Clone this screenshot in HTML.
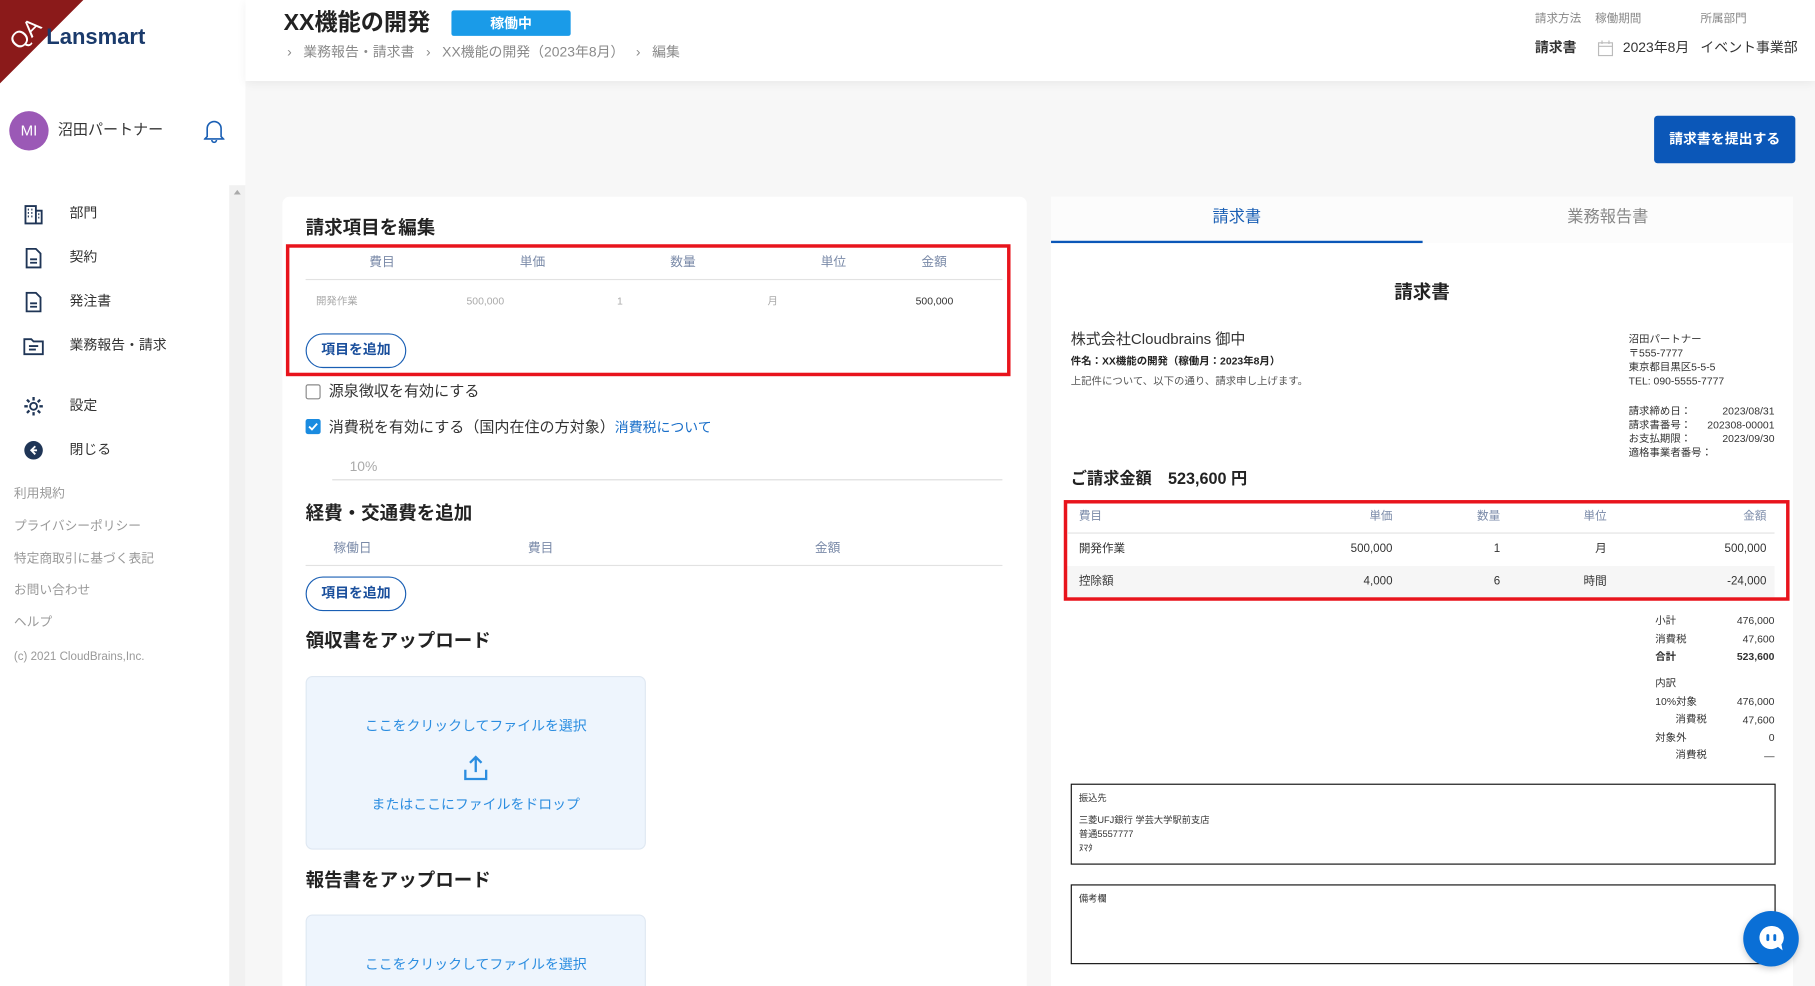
<!DOCTYPE html>
<html><head><meta charset="utf-8">
<style>
*{box-sizing:border-box;margin:0;padding:0}
html,body{width:1815px;height:986px;overflow:hidden;background:#f7f7f7}
body{font-family:"Liberation Sans","Noto Sans CJK JP",sans-serif;color:#222}
#w{position:absolute;left:0;top:0;width:1568px;height:852px;transform:scale(1.15753);transform-origin:0 0;overflow:hidden;background:#f7f7f7}
.a{position:absolute;white-space:nowrap;line-height:1.45}
.sb{left:0;top:0;width:212px;height:852px;background:#fff}
.mi{font-size:12px;color:#333}
.ft{font-size:11px;color:#999;left:12px}
.ic{position:absolute;left:20px;width:18px;height:18px}
.hl{font-size:10px;color:#888}
.card{background:#fff;border-radius:6px}
.h2{font-size:16px;font-weight:bold;color:#222}
.th{font-size:11px;color:#7a8aa8}
.td{font-size:9px;color:#aaa}
.pill{border:1.5px solid #1a5fb4;border-radius:16px;font-size:12px;font-weight:bold;color:#1a4f9c;text-align:center;line-height:27px}
.up{background:#eef5fd;border:1px solid #dfe8f2;border-radius:6px}
.ut{font-size:12px;color:#2b8de0;width:100%;text-align:center;left:0}
.s9{font-size:9px;color:#333}
.rt{text-align:right}
.red{border:3px solid #e8141c}
</style></head><body><div id="w">
<!-- sidebar -->
<div class="a sb"></div>
<div class="a" style="left:198px;top:160px;width:14px;height:692px;background:#f1f1f1"></div>
<div class="a" style="left:202px;top:164px;width:0;height:0;border:3px solid transparent;border-bottom:4px solid #aaa;border-top:0"></div>
<svg class="a" style="left:0;top:0" width="75" height="75"><polygon points="0,0 72,0 0,72" fill="#8b1a1a"/><text x="4" y="36" font-size="20" fill="#fff" transform="rotate(-45 20 25)" font-family="Liberation Sans">QA</text></svg>
<div class="a" style="left:40px;top:19px;font-size:19px;font-weight:bold;color:#1a3a6b">Lansmart</div>
<div class="a" style="left:8px;top:96px;width:34px;height:34px;border-radius:50%;background:#9b59b6;color:#fff;font-size:13px;text-align:center;line-height:34px">MI</div>
<div class="a" style="left:50px;top:103px;font-size:13px;color:#333">沼田パートナー</div>
<svg class="a" style="left:176px;top:102px" width="18" height="22" viewBox="0 0 18 22"><path d="M3 16V9a6 6 0 0 1 12 0v7l2 2H1z M7 19a2 2 0 0 0 4 0" fill="none" stroke="#1a5fb4" stroke-width="1.4"/></svg>
<svg class="ic" style="top:176px" viewBox="0 0 18 18"><path d="M2 2h9v15H2z M11 6h5v11h-5" fill="none" stroke="#1f3556" stroke-width="1.6"/><path d="M4 5h1M7 5h1M4 8h1M7 8h1M4 11h1M7 11h1M13 9h1M13 12h1" stroke="#1f3556" stroke-width="1.6"/></svg>
<div class="a mi" style="left:60px;top:176px">部門</div>
<svg class="ic" style="top:214px" viewBox="0 0 18 18"><path d="M3 1h8l4 4v12H3z M6 10h6M6 13h6" fill="none" stroke="#1f3556" stroke-width="1.6"/></svg>
<div class="a mi" style="left:60px;top:214px">契約</div>
<svg class="ic" style="top:252px" viewBox="0 0 18 18"><path d="M3 1h8l4 4v12H3z M6 10h6M6 13h6" fill="none" stroke="#1f3556" stroke-width="1.6"/></svg>
<div class="a mi" style="left:60px;top:252px">発注書</div>
<svg class="ic" style="top:290px" viewBox="0 0 18 18"><path d="M1 3h6l2 2h8v11H1z M5 9h8M5 12h6" fill="none" stroke="#1f3556" stroke-width="1.6"/></svg>
<div class="a mi" style="left:60px;top:290px">業務報告・請求</div>
<svg class="ic" style="top:342px" viewBox="0 0 18 18"><circle cx="9" cy="9" r="3" fill="none" stroke="#1f3556" stroke-width="1.6"/><path d="M9 1v3M9 14v3M1 9h3M14 9h3M3.3 3.3l2.1 2.1M12.6 12.6l2.1 2.1M3.3 14.7l2.1-2.1M12.6 5.4l2.1-2.1" stroke="#1f3556" stroke-width="2"/></svg>
<div class="a mi" style="left:60px;top:342px">設定</div>
<svg class="ic" style="top:380px" viewBox="0 0 18 18"><circle cx="9" cy="9" r="8" fill="#1f3556"/><path d="M10.5 5.5L7 9l3.5 3.5M7 9h5" fill="none" stroke="#fff" stroke-width="1.6"/></svg>
<div class="a mi" style="left:60px;top:380px">閉じる</div>
<div class="a ft" style="top:420px">利用規約</div>
<div class="a ft" style="top:448px">プライバシーポリシー</div>
<div class="a ft" style="top:476px">特定商取引に基づく表記</div>
<div class="a ft" style="top:503px">お問い合わせ</div>
<div class="a ft" style="top:531px">ヘルプ</div>
<div class="a ft" style="top:561px;font-size:10px">(c) 2021 CloudBrains,Inc.</div>
<!-- header -->
<div class="a" style="left:212px;top:0;width:1356px;height:70px;background:#fff;box-shadow:0 2px 8px rgba(0,0,0,.06)"></div>
<div class="a" style="left:245px;top:6px;font-size:20px;font-weight:bold;color:#222">XX機能の開発</div>
<div class="a" style="left:390px;top:9px;width:103px;height:22px;background:#1a9be8;border-radius:2px;color:#fff;font-size:12px;font-weight:bold;text-align:center;line-height:22px">稼働中</div>
<div class="a" style="left:248px;top:37px;font-size:12px;color:#8a8a8a">›&nbsp;&nbsp;&nbsp;業務報告・請求書&nbsp;&nbsp;&nbsp;›&nbsp;&nbsp;&nbsp;XX機能の開発（2023年8月）&nbsp;&nbsp;&nbsp;›&nbsp;&nbsp;&nbsp;編集</div>
<div class="a hl" style="left:1326px;top:10px">請求方法</div>
<div class="a hl" style="left:1378px;top:10px">稼働期間</div>
<div class="a hl" style="left:1469px;top:10px">所属部門</div>
<div class="a" style="left:1326px;top:33px;font-size:12px;font-weight:bold;color:#333">請求書</div>
<svg class="a" style="left:1380px;top:34px" width="14" height="15"><rect x="1" y="3" width="12" height="11" fill="none" stroke="#bbb"/><path d="M1 6h12M4 1v3M10 1v3" stroke="#bbb"/></svg>
<div class="a" style="left:1402px;top:33px;font-size:12px;color:#333">2023年8月</div>
<div class="a" style="left:1469px;top:33px;font-size:12px;color:#333">イベント事業部</div>
<div class="a" style="left:1429px;top:100px;width:122px;height:41px;background:#0b57b8;border-radius:3px;color:#fff;font-size:12px;font-weight:bold;text-align:center;line-height:41px">請求書を提出する</div>
<!-- left card -->
<div class="a card" style="left:244px;top:170px;width:643px;height:700px"></div>
<div class="a h2" style="left:264px;top:186px">請求項目を編集</div>
<div class="a red" style="left:247px;top:211px;width:626px;height:114px"></div>
<div class="a th" style="left:319px;top:220px">費目</div>
<div class="a th" style="left:449px;top:220px">単価</div>
<div class="a th" style="left:579px;top:220px">数量</div>
<div class="a th" style="left:709px;top:220px">単位</div>
<div class="a th" style="left:796px;top:220px">金額</div>
<div class="a" style="left:264px;top:241px;width:602px;height:1px;background:#e2e2e2"></div>
<div class="a td" style="left:273px;top:254px">開発作業</div>
<div class="a td" style="left:403px;top:254px">500,000</div>
<div class="a td" style="left:533px;top:254px">1</div>
<div class="a td" style="left:663px;top:254px">月</div>
<div class="a td" style="left:791px;top:254px;color:#333">500,000</div>
<div class="a pill" style="left:264px;top:288px;width:87px;height:30px">項目を追加</div>
<div class="a" style="left:264px;top:332px;width:13px;height:13px;border:1.5px solid #888;border-radius:2px"></div>
<div class="a" style="left:284px;top:329px;font-size:13px;color:#333">源泉徴収を有効にする</div>
<div class="a" style="left:264px;top:362px;width:13px;height:13px;background:#1a8be0;border-radius:2px"></div>
<svg class="a" style="left:264px;top:362px" width="13" height="13"><path d="M3 6.5l2.5 2.5 4.5-5" fill="none" stroke="#fff" stroke-width="1.6"/></svg>
<div class="a" style="left:284px;top:360px;font-size:13px;color:#333">消費税を有効にする（国内在住の方対象）<span style="color:#1a6fc9;font-size:12px">消費税について</span></div>
<div class="a" style="left:302px;top:395px;font-size:12px;color:#aaa">10%</div>
<div class="a" style="left:287px;top:414px;width:579px;height:1px;background:#ddd"></div>
<div class="a h2" style="left:264px;top:433px">経費・交通費を追加</div>
<div class="a th" style="left:288px;top:467px">稼働日</div>
<div class="a th" style="left:456px;top:467px">費目</div>
<div class="a th" style="left:704px;top:467px">金額</div>
<div class="a" style="left:264px;top:488px;width:602px;height:1px;background:#e2e2e2"></div>
<div class="a pill" style="left:264px;top:498px;width:87px;height:30px">項目を追加</div>
<div class="a h2" style="left:264px;top:543px">領収書をアップロード</div>
<div class="a up" style="left:264px;top:584px;width:294px;height:150px">
<div class="a ut" style="top:34px">ここをクリックしてファイルを選択</div>
<svg class="a" style="left:134px;top:66px" width="24" height="26"><path d="M12 16V3M7 8l5-5 5 5M3 14v8h18v-8" fill="none" stroke="#2b8de0" stroke-width="2"/></svg>
<div class="a ut" style="top:102px">またはここにファイルをドロップ</div>
</div>
<div class="a h2" style="left:264px;top:750px">報告書をアップロード</div>
<div class="a up" style="left:264px;top:790px;width:294px;height:80px">
<div class="a ut" style="top:34px">ここをクリックしてファイルを選択</div>
</div>
<!-- right card -->
<div class="a" style="left:908px;top:170px;width:641px;height:700px;background:#fff"></div>
<div class="a" style="left:908px;top:170px;width:641px;height:40px;background:#fcfcfc"></div>
<div class="a" style="left:908px;top:177px;width:321px;text-align:center;font-size:14px;color:#1a5fb4">請求書</div>
<div class="a" style="left:1229px;top:177px;width:320px;text-align:center;font-size:14px;color:#888">業務報告書</div>
<div class="a" style="left:908px;top:208px;width:321px;height:2px;background:#0b57b8"></div>
<div class="a" style="left:908px;top:242px;width:641px;text-align:center;font-size:16px;font-weight:bold">請求書</div>
<div class="a" style="left:925px;top:284px;font-size:13px;color:#333">株式会社Cloudbrains 御中</div>
<div class="a" style="left:925px;top:306px;font-size:9px;font-weight:bold">件名：XX機能の開発（稼働月：2023年8月）</div>
<div class="a" style="left:925px;top:323px;font-size:9px;color:#555">上記件について、以下の通り、請求申し上げます。</div>
<div class="a s9" style="left:1407px;top:287px;line-height:12px">沼田パートナー<br>〒555-7777<br>東京都目黒区5-5-5<br>TEL: 090-5555-7777</div>
<div class="a s9" style="left:1407px;top:349px;line-height:12px">請求締め日：<br>請求書番号：<br>お支払期限：<br>適格事業者番号：</div>
<div class="a s9 rt" style="left:1433px;width:100px;top:349px;line-height:12px">2023/08/31<br>202308-00001<br>2023/09/30</div>
<div class="a" style="left:925px;top:403px;font-size:14px;font-weight:bold">ご請求金額　523,600 円</div>
<div class="a" style="left:922px;top:489px;width:611px;height:27px;background:#f6f6f6"></div>
<div class="a red" style="left:919px;top:432px;width:627px;height:87px"></div>
<div class="a" style="left:922px;top:460px;width:611px;height:1px;background:#e2e2e2"></div>
<div class="a th" style="left:932px;top:440px;font-size:10px;line-height:14px">費目</div>
<div class="a th rt" style="left:1103px;width:100px;top:440px;font-size:10px;line-height:14px">単価</div>
<div class="a th rt" style="left:1196px;width:100px;top:440px;font-size:10px;line-height:14px">数量</div>
<div class="a th rt" style="left:1288px;width:100px;top:440px;font-size:10px;line-height:14px">単位</div>
<div class="a th rt" style="left:1426px;width:100px;top:440px;font-size:10px;line-height:14px">金額</div>
<div class="a" style="left:932px;top:468px;font-size:10px;color:#333;line-height:14px">開発作業</div>
<div class="a rt" style="left:1103px;width:100px;top:468px;font-size:10px;color:#333;line-height:14px">500,000</div>
<div class="a rt" style="left:1196px;width:100px;top:468px;font-size:10px;color:#333;line-height:14px">1</div>
<div class="a rt" style="left:1288px;width:100px;top:468px;font-size:10px;color:#333;line-height:14px">月</div>
<div class="a rt" style="left:1426px;width:100px;top:468px;font-size:10px;color:#333;line-height:14px">500,000</div>
<div class="a" style="left:932px;top:496px;font-size:10px;color:#333;line-height:14px">控除額</div>
<div class="a rt" style="left:1103px;width:100px;top:496px;font-size:10px;color:#333;line-height:14px">4,000</div>
<div class="a rt" style="left:1196px;width:100px;top:496px;font-size:10px;color:#333;line-height:14px">6</div>
<div class="a rt" style="left:1288px;width:100px;top:496px;font-size:10px;color:#333;line-height:14px">時間</div>
<div class="a rt" style="left:1426px;width:100px;top:496px;font-size:10px;color:#333;line-height:14px">-24,000</div>
<div class="a s9" style="left:1430px;top:529px;line-height:15.6px">小計<br>消費税<br><b>合計</b></div>
<div class="a s9 rt" style="left:1453px;width:80px;top:529px;line-height:15.6px">476,000<br>47,600<br><b>523,600</b></div>
<div class="a s9" style="left:1430px;top:583px;line-height:15.6px">内訳<br>10%対象<br>&nbsp;&nbsp;&nbsp;&nbsp;&nbsp;&nbsp;&nbsp;消費税<br>対象外<br>&nbsp;&nbsp;&nbsp;&nbsp;&nbsp;&nbsp;&nbsp;消費税</div>
<div class="a s9 rt" style="left:1453px;width:80px;top:599px;line-height:15.6px">476,000<br>47,600<br>0<br>—</div>
<div class="a" style="left:925px;top:677px;width:609px;height:70px;border:1px solid #111"></div>
<div class="a" style="left:932px;top:684px;font-size:8px;color:#333">振込先</div>
<div class="a" style="left:932px;top:703px;font-size:8px;color:#333;line-height:12px">三菱UFJ銀行 学芸大学駅前支店<br>普通5557777<br>ﾇﾏﾀ</div>
<div class="a" style="left:925px;top:764px;width:609px;height:69px;border:1px solid #111"></div>
<div class="a" style="left:932px;top:771px;font-size:8px;color:#333">備考欄</div>
<div class="a" style="left:1506px;top:787px;width:48px;height:48px;border-radius:50%;background:#0a6fd6;box-shadow:0 2px 6px rgba(0,0,0,.2)"></div>
<svg class="a" style="left:1516px;top:797px" width="28" height="28"><path d="M14 3a10 10 0 1 0 6 18l4 3-1-5A10 10 0 0 0 14 3z" fill="#fff"/><rect x="10" y="10" width="2.5" height="6" rx="1.2" fill="#0a6fd6"/><rect x="16" y="10" width="2.5" height="6" rx="1.2" fill="#0a6fd6"/></svg>
</div></body></html>
